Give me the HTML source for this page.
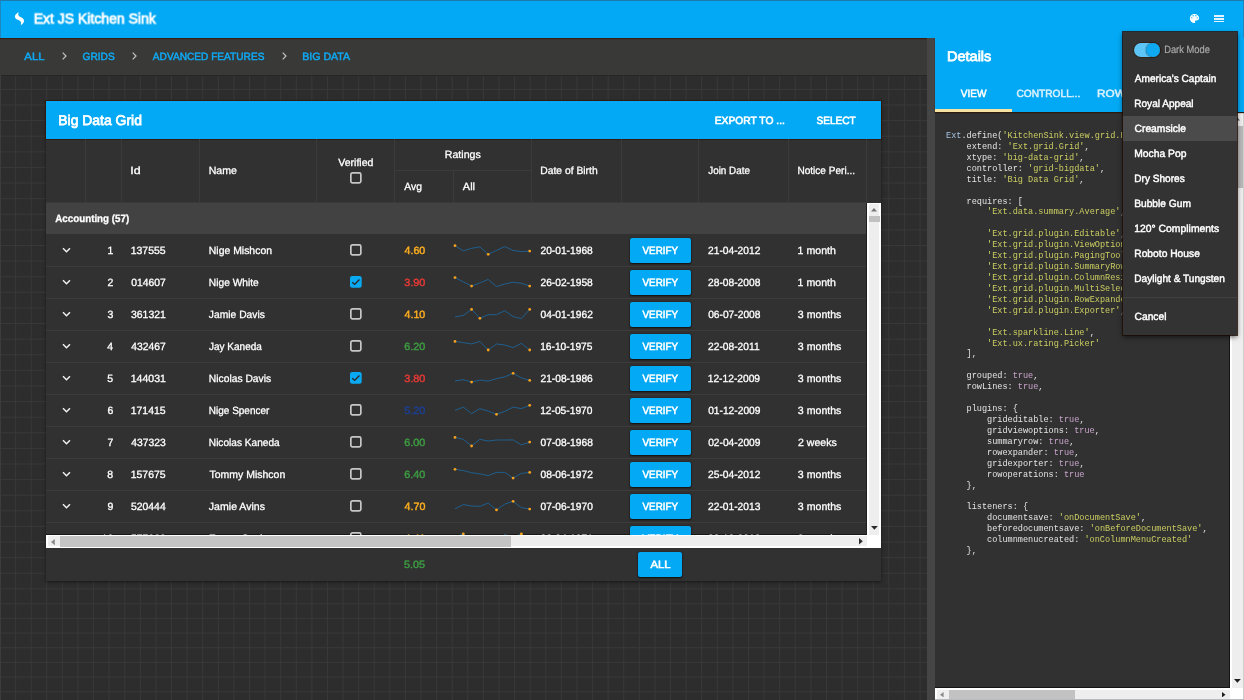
<!DOCTYPE html>
<html><head><meta charset="utf-8"><title>Ext JS Kitchen Sink</title>
<style>
*{box-sizing:border-box;margin:0;padding:0}
html,body{width:1244px;height:700px;overflow:hidden;background:#2d2d2d}
body{font-family:"Liberation Sans",sans-serif;font-size:10.5px;color:#fff;position:relative}
.abs{position:absolute}
.t{position:absolute;white-space:nowrap;line-height:14px;height:14px;display:block;-webkit-text-stroke:0.3px;transform-origin:0 50%}
#bg{left:0;top:75px;width:927px;height:521px;background-color:#2d2d2d;
 background-image:linear-gradient(#383838 1px,transparent 1px),linear-gradient(90deg,#383838 1px,transparent 1px);
 background-size:15.6px 15.62px;background-position:0 13.9px,15.1px 0}
#bg2{left:0;top:596px;width:927px;height:104px;background-color:#2d2d2d;
 background-image:linear-gradient(#383838 1px,transparent 1px),linear-gradient(90deg,#383838 1px,transparent 1px);
 background-size:15.6px 14.68px;background-position:0 7.2px,15.1px 0}
#top{left:0;top:0;width:1244px;height:38px;background:#03a9f4;border-top:1px solid #2079ab;border-left:1px solid #1f86c0;border-right:1px solid #1f86c0;box-shadow:0 1px 1px #3a1d10}
#crumbs{left:0;top:38px;width:927px;height:37px;background:#393938}
#split{left:927px;top:38px;width:8px;height:662px;background:#454545}
#det{left:935px;top:38px;width:309px;height:662px;background:#313131}
#dethead{left:0;top:0;width:309px;height:74px;background:#03a9f4;box-shadow:0 1px 1px #2a1a10;z-index:2}
#panel{left:46px;top:101px;width:835px;height:480px;background:#313131;box-shadow:0 1px 3px rgba(0,0,0,.5)}
#ptitle{left:0;top:0;width:835px;height:38px;background:#03a9f4;box-shadow:0 0 0 1px rgba(50,22,10,.85)}
.vl{position:absolute;width:1px;background:#3b3b3b}
.hl{position:absolute;height:1px;background:#3b3b3b}
.btn{position:absolute;background:#03a9f4;border-radius:2px;box-shadow:0 1px 2px rgba(0,0,0,.7),0 0 1px rgba(20,5,0,.8);height:25px}
.cb{position:absolute;width:11.6px;height:11.6px;border:1.8px solid #c4c4c4;border-radius:2.5px}
.cb.on{background:#03a9f4;border-color:#03a9f4}
#code{left:0;top:74px;width:295px;height:576px;overflow:hidden}
pre{font-family:"Liberation Mono",monospace;font-size:8.55px;line-height:10.92px;color:#e4e4e4;position:absolute;left:10.5px;top:19.3px;will-change:transform}
pre .s{color:#cbce62}pre .k{color:#a3c3e4}pre .tr{color:#c9a4cc}
#menu{left:1123px;top:32px;width:114px;height:303px;background:#333;z-index:10;box-shadow:0 2px 5px rgba(0,0,0,.6),0 0 0 1px rgba(42,18,8,.8)}
#root{position:absolute;left:0;top:0;width:1244px;height:700px;will-change:transform}
</style></head><body><div id="root">

<div id="bg" class="abs"></div><div id="bg2" class="abs"></div>
<div class="abs" style="left:0;top:75px;width:927px;height:1px;background:#262626"></div>
<div class="abs" style="left:0;top:38px;width:1px;height:662px;background:#3c3c3c"></div>
<div id="crumbs" class="abs">
<span class="t" style="left:24px;top:11px;transform:translate(0.31px,0.00px) skewX(.1deg) scaleX(1.0798);color:#0fa9f2;-webkit-text-stroke:0.5px;">ALL</span>
<span class="t" style="left:82px;top:11px;transform:translate(0.51px,0.00px) skewX(.1deg) scaleX(0.9671);color:#0fa9f2;-webkit-text-stroke:0.5px;">GRIDS</span>
<span class="t" style="left:152px;top:11px;transform:translate(0.83px,0.00px) skewX(.1deg) scaleX(0.9643);color:#0fa9f2;-webkit-text-stroke:0.5px;">ADVANCED FEATURES</span>
<span class="t" style="left:302px;top:11px;transform:translate(0.18px,0.00px) skewX(.1deg) scaleX(1.0095);color:#0fa9f2;-webkit-text-stroke:0.5px;">BIG DATA</span>
<svg class="abs" style="left:61.5px;top:14px" width="5" height="8" viewBox="0 0 5 8"><path d="M0.7 0.7 L4 4 L0.7 7.3" fill="none" stroke="#c4c4c4" stroke-width="1.2"/></svg>
<svg class="abs" style="left:131.5px;top:14px" width="5" height="8" viewBox="0 0 5 8"><path d="M0.7 0.7 L4 4 L0.7 7.3" fill="none" stroke="#c4c4c4" stroke-width="1.2"/></svg>
<svg class="abs" style="left:281.5px;top:14px" width="5" height="8" viewBox="0 0 5 8"><path d="M0.7 0.7 L4 4 L0.7 7.3" fill="none" stroke="#c4c4c4" stroke-width="1.2"/></svg>
</div>
<div id="top" class="abs">
<svg class="abs" style="left:13px;top:10px" width="12" height="16" viewBox="14 11 12 16"><path d="M18.8 12.2 C16.6 13.2 14.7 14.9 14.9 16.9 C15.1 18.9 17.6 19.5 19.3 20.4 C20.9 21.3 21.6 22.9 20.7 25.2 C22.9 24.1 24.3 22.3 24 20.3 C23.7 18.3 21.4 17.6 19.9 16.8 C18.4 16 17.7 14.4 18.8 12.2 Z" fill="#fff"/></svg>
<span class="t" style="left:32px;top:10px;transform:translate(0.77px,0.50px) skewX(.1deg) scaleX(0.9977);font-size:14px;-webkit-text-stroke:0.75px;">Ext JS Kitchen Sink</span>
<svg class="abs" style="left:1188px;top:12.2px" width="11" height="11" viewBox="0 0 24 24"><path fill="#fff" d="M12 2C6.5 2 2 6.5 2 12s4.5 10 10 10c.9 0 1.7-.7 1.7-1.7 0-.4-.2-.8-.4-1.1-.3-.3-.4-.7-.4-1.1 0-.9.7-1.7 1.7-1.7h2c3 0 5.5-2.5 5.5-5.5C22 6 17.5 2 12 2zM6 12c-.8 0-1.5-.7-1.5-1.5S5.2 9 6 9s1.5.7 1.5 1.5S6.800 12 6 12zm3-4.500C8.200 7.500 7.500 6.800 7.500 6S8.200 4.500 9 4.500s1.500.7 1.500 1.500S9.800 7.500 9 7.500zm6 0c-.8 0-1.500-.7-1.500-1.500S14.200 4.500 15 4.500s1.500.7 1.500 1.500-.7 1.500-1.500 1.500zm3 4.500c-.8 0-1.500-.7-1.500-1.500S17.200 9 18 9s1.500.7 1.500 1.500-.7 1.500-1.500 1.500z"/></svg>
<div class="abs" style="left:1213px;top:14.3px;width:10px;height:1.5px;background:#e3f4fe"></div>
<div class="abs" style="left:1213px;top:17.0px;width:10px;height:1.5px;background:#e3f4fe"></div>
<div class="abs" style="left:1213px;top:19.7px;width:10px;height:1.5px;background:#e3f4fe"></div>
</div>
<div id="split" class="abs"></div>
<div id="panel" class="abs">
<div id="ptitle" class="abs">
<span class="t" style="left:12px;top:11px;transform:translate(0.28px,0.60px) skewX(.1deg) scaleX(0.9955);font-size:14px;-webkit-text-stroke:0.75px;">Big Data Grid</span>
<span class="t" style="left:668px;top:12px;transform:translate(0.71px,0.00px) skewX(.1deg) scaleX(0.9809);-webkit-text-stroke:0.6px;">EXPORT TO ...</span>
<span class="t" style="left:770px;top:12px;transform:translate(0.49px,0.00px) skewX(.1deg) scaleX(0.9616);-webkit-text-stroke:0.6px;">SELECT</span>
</div>
<div class="vl" style="left:39px;top:38px;height:64px"></div>
<div class="vl" style="left:75px;top:38px;height:64px"></div>
<div class="vl" style="left:153px;top:38px;height:64px"></div>
<div class="vl" style="left:270px;top:38px;height:64px"></div>
<div class="vl" style="left:348px;top:38px;height:64px"></div>
<div class="vl" style="left:485px;top:38px;height:64px"></div>
<div class="vl" style="left:575px;top:38px;height:64px"></div>
<div class="vl" style="left:652px;top:38px;height:64px"></div>
<div class="vl" style="left:742px;top:38px;height:64px"></div>
<div class="vl" style="left:820px;top:38px;height:64px"></div>
<div class="vl" style="left:407px;top:70px;height:32px"></div>
<div class="hl" style="left:349px;top:69px;width:136px"></div>
<span class="t" style="left:84px;top:62px;transform:translate(0.28px,0.00px) skewX(.1deg) scaleX(1.1880);">Id</span>
<span class="t" style="left:162px;top:62px;transform:translate(0.69px,0.00px) skewX(.1deg) scaleX(1.0064);">Name</span>
<span class="t" style="left:292px;top:54px;transform:translate(0.20px,0.00px) skewX(.1deg) scaleX(1.0046);">Verified</span>
<svg class="abs" style="left:304.1px;top:71px" width="12" height="12" viewBox="0 0 12 12"><rect x="0.85" y="0.85" width="10" height="10" rx="1.6" fill="none" stroke="#c6c6c6" stroke-width="1.7"/></svg>
<span class="t" style="left:398px;top:46px;transform:translate(0.78px,0.00px) skewX(.1deg) scaleX(1.0097);">Ratings</span>
<span class="t" style="left:358px;top:78px;transform:translate(0.33px,0.00px) skewX(.1deg) scaleX(0.9819);">Avg</span>
<span class="t" style="left:416px;top:78px;transform:translate(0.82px,0.00px) skewX(.1deg) scaleX(1.0446);">All</span>
<span class="t" style="left:494px;top:62px;transform:translate(0.20px,0.00px) skewX(.1deg) scaleX(0.9843);">Date of Birth</span>
<span class="t" style="left:662px;top:62px;transform:translate(0.18px,0.00px) skewX(.1deg) scaleX(0.9417);">Join Date</span>
<span class="t" style="left:751px;top:62px;transform:translate(0.43px,0.00px) skewX(.1deg) scaleX(0.9580);">Notice Peri...</span>
<div class="abs" style="left:0;top:101px;width:821px;height:1px;background:#3a3a3a"></div>
<div class="abs" style="left:0;top:102px;width:821px;height:31px;background:#424242"></div>
<span class="t" style="left:9px;top:110px;transform:translate(0.25px,0.00px) skewX(.1deg) scaleX(0.9316);font-weight:700;">Accounting (57)</span>
<div class="abs" style="left:0;top:133px;width:821px;height:301px;overflow:hidden">
<div class="abs" style="left:0;top:300px;width:821px;height:1px;background:#181818"></div>
<svg class="abs" style="left:15.5px;top:13px" width="9" height="7" viewBox="0 0 9 7"><path d="M1 1.2 L4.5 4.8 L8 1.2" fill="none" stroke="#f0f0f0" stroke-width="1.45"/></svg>
<span class="t" style="left:61px;top:9px;transform:translate(0.46px,0.00px) skewX(.1deg) scaleX(1.0000);">1</span>
<span class="t" style="left:84px;top:9px;transform:translate(0.71px,0.00px) skewX(.1deg) scaleX(0.9980);">137555</span>
<span class="t" style="left:162px;top:9px;transform:translate(0.80px,0.00px) skewX(.1deg) scaleX(0.9933);">Nige Mishcon</span>
<svg class="abs" style="left:304.3px;top:10.1px" width="12" height="12" viewBox="0 0 12 12"><rect x="0.85" y="0.85" width="10" height="10" rx="1.6" fill="none" stroke="#c6c6c6" stroke-width="1.7"/></svg>
<span class="t" style="left:358px;top:9px;transform:translate(0.53px,0.00px) skewX(.1deg) scaleX(1.0160);color:#fbad1e;-webkit-text-stroke:0.45px;">4.60</span>
<svg class="abs" style="left:0;top:0;overflow:visible" width="1" height="1"><polyline points="409.0,11.7 417.3,16.9 425.6,14.3 433.9,12.9 442.2,20.3 450.5,16.4 458.8,12.6 467.1,16.4 475.4,17.6 483.7,17.1" fill="none" stroke="#1f5f8e" stroke-width="1"/><circle cx="409.0" cy="11.7" r="1.4" fill="#f7a11b"/><circle cx="442.2" cy="20.3" r="1.4" fill="#f7a11b"/><circle cx="483.7" cy="17.1" r="1.4" fill="#f7a11b"/></svg>
<span class="t" style="left:494px;top:9px;transform:translate(0.44px,0.00px) skewX(.1deg) scaleX(0.9740);">20-01-1968</span>
<div class="btn" style="left:584px;top:4px;width:61px"></div>
<span class="t" style="left:596px;top:9px;transform:translate(0.51px,0.30px) skewX(.1deg) scaleX(0.9375);-webkit-text-stroke:0.55px;">VERIFY</span>
<span class="t" style="left:662px;top:9px;transform:translate(0.04px,0.00px) skewX(.1deg) scaleX(0.9740);">21-04-2012</span>
<span class="t" style="left:751px;top:9px;transform:translate(0.60px,0.00px) skewX(.1deg) scaleX(1.0080);">1 month</span>
<div class="hl" style="left:0;top:32px;width:821px"></div>
<svg class="abs" style="left:15.5px;top:45px" width="9" height="7" viewBox="0 0 9 7"><path d="M1 1.2 L4.5 4.8 L8 1.2" fill="none" stroke="#f0f0f0" stroke-width="1.45"/></svg>
<span class="t" style="left:61px;top:41px;transform:translate(0.49px,0.00px) skewX(.1deg) scaleX(1.0000);">2</span>
<span class="t" style="left:85px;top:41px;transform:translate(0.13px,0.00px) skewX(.1deg) scaleX(0.9869);">014607</span>
<span class="t" style="left:162px;top:41px;transform:translate(0.81px,0.00px) skewX(.1deg) scaleX(0.9730);">Nige White</span>
<svg class="abs" style="left:304.3px;top:42.1px" width="12" height="12" viewBox="0 0 12 12"><rect x="0" y="0" width="11.7" height="11.7" rx="2.2" fill="#0aaaf3"/><path d="M2.3 6.2 L4.7 8.4 L9.4 3.5" fill="none" stroke="#2a2320" stroke-width="1.35"/></svg>
<span class="t" style="left:358px;top:41px;transform:translate(0.15px,0.00px) skewX(.1deg) scaleX(1.0366);color:#e53935;-webkit-text-stroke:0.45px;">3.90</span>
<svg class="abs" style="left:0;top:0;overflow:visible" width="1" height="1"><polyline points="409.0,43.6 417.3,47.9 425.6,52.1 433.9,48.9 442.2,45.4 450.5,52.6 458.8,50.0 467.1,48.3 475.4,49.3 483.7,52.1" fill="none" stroke="#1f5f8e" stroke-width="1"/><circle cx="409.0" cy="43.6" r="1.4" fill="#f7a11b"/><circle cx="425.6" cy="52.1" r="1.4" fill="#f7a11b"/><circle cx="483.7" cy="52.1" r="1.4" fill="#f7a11b"/></svg>
<span class="t" style="left:494px;top:41px;transform:translate(0.44px,0.00px) skewX(.1deg) scaleX(0.9740);">26-02-1958</span>
<div class="btn" style="left:584px;top:36px;width:61px"></div>
<span class="t" style="left:596px;top:41px;transform:translate(0.51px,0.30px) skewX(.1deg) scaleX(0.9375);-webkit-text-stroke:0.55px;">VERIFY</span>
<span class="t" style="left:662px;top:41px;transform:translate(0.04px,0.00px) skewX(.1deg) scaleX(0.9740);">28-08-2008</span>
<span class="t" style="left:751px;top:41px;transform:translate(0.60px,0.00px) skewX(.1deg) scaleX(1.0080);">1 month</span>
<div class="hl" style="left:0;top:64px;width:821px"></div>
<svg class="abs" style="left:15.5px;top:77px" width="9" height="7" viewBox="0 0 9 7"><path d="M1 1.2 L4.5 4.8 L8 1.2" fill="none" stroke="#f0f0f0" stroke-width="1.45"/></svg>
<span class="t" style="left:61px;top:73px;transform:translate(0.40px,0.00px) skewX(.1deg) scaleX(1.0000);">3</span>
<span class="t" style="left:84px;top:73px;transform:translate(0.96px,0.00px) skewX(.1deg) scaleX(0.9954);">361321</span>
<span class="t" style="left:162px;top:73px;transform:translate(0.86px,0.00px) skewX(.1deg) scaleX(0.9787);">Jamie Davis</span>
<svg class="abs" style="left:304.3px;top:74.1px" width="12" height="12" viewBox="0 0 12 12"><rect x="0.85" y="0.85" width="10" height="10" rx="1.6" fill="none" stroke="#c6c6c6" stroke-width="1.7"/></svg>
<span class="t" style="left:358px;top:73px;transform:translate(0.53px,0.00px) skewX(.1deg) scaleX(1.0160);color:#fbad1e;-webkit-text-stroke:0.45px;">4.10</span>
<svg class="abs" style="left:0;top:0;overflow:visible" width="1" height="1"><polyline points="409.0,82.9 417.3,81.4 425.6,75.4 433.9,84.3 442.2,80.7 450.5,80.7 458.8,76.7 467.1,82.6 475.4,84.6 483.7,75.4" fill="none" stroke="#1f5f8e" stroke-width="1"/><circle cx="425.6" cy="75.4" r="1.4" fill="#f7a11b"/><circle cx="433.9" cy="84.3" r="1.4" fill="#f7a11b"/><circle cx="483.7" cy="75.4" r="1.4" fill="#f7a11b"/></svg>
<span class="t" style="left:494px;top:73px;transform:translate(0.54px,0.00px) skewX(.1deg) scaleX(0.9740);">04-01-1962</span>
<div class="btn" style="left:584px;top:68px;width:61px"></div>
<span class="t" style="left:596px;top:73px;transform:translate(0.51px,0.30px) skewX(.1deg) scaleX(0.9375);-webkit-text-stroke:0.55px;">VERIFY</span>
<span class="t" style="left:662px;top:73px;transform:translate(0.14px,0.00px) skewX(.1deg) scaleX(0.9740);">06-07-2008</span>
<span class="t" style="left:751px;top:73px;transform:translate(0.85px,0.00px) skewX(.1deg) scaleX(1.0080);">3 months</span>
<div class="hl" style="left:0;top:96px;width:821px"></div>
<svg class="abs" style="left:15.5px;top:109px" width="9" height="7" viewBox="0 0 9 7"><path d="M1 1.2 L4.5 4.8 L8 1.2" fill="none" stroke="#f0f0f0" stroke-width="1.45"/></svg>
<span class="t" style="left:61px;top:105px;transform:translate(0.28px,0.00px) skewX(.1deg) scaleX(1.0000);">4</span>
<span class="t" style="left:85px;top:105px;transform:translate(0.28px,0.00px) skewX(.1deg) scaleX(0.9831);">432467</span>
<span class="t" style="left:162px;top:105px;transform:translate(0.89px,0.00px) skewX(.1deg) scaleX(0.9555);">Jay Kaneda</span>
<svg class="abs" style="left:304.3px;top:106.1px" width="12" height="12" viewBox="0 0 12 12"><rect x="0.85" y="0.85" width="10" height="10" rx="1.6" fill="none" stroke="#c6c6c6" stroke-width="1.7"/></svg>
<span class="t" style="left:358px;top:105px;transform:translate(0.21px,0.00px) skewX(.1deg) scaleX(1.0317);color:#3d9b42;-webkit-text-stroke:0.45px;">6.20</span>
<svg class="abs" style="left:0;top:0;overflow:visible" width="1" height="1"><polyline points="409.0,107.4 417.3,108.6 425.6,109.9 433.9,107.4 442.2,116.0 450.5,110.0 458.8,111.0 467.1,113.6 475.4,109.3 483.7,116.0" fill="none" stroke="#1f5f8e" stroke-width="1"/><circle cx="409.0" cy="107.4" r="1.4" fill="#f7a11b"/><circle cx="442.2" cy="116.0" r="1.4" fill="#f7a11b"/><circle cx="483.7" cy="116.0" r="1.4" fill="#f7a11b"/></svg>
<span class="t" style="left:494px;top:105px;transform:translate(0.13px,0.00px) skewX(.1deg) scaleX(0.9740);">16-10-1975</span>
<div class="btn" style="left:584px;top:100px;width:61px"></div>
<span class="t" style="left:596px;top:105px;transform:translate(0.51px,0.30px) skewX(.1deg) scaleX(0.9375);-webkit-text-stroke:0.55px;">VERIFY</span>
<span class="t" style="left:662px;top:105px;transform:translate(0.04px,0.00px) skewX(.1deg) scaleX(0.9740);">22-08-2011</span>
<span class="t" style="left:751px;top:105px;transform:translate(0.85px,0.00px) skewX(.1deg) scaleX(1.0080);">3 months</span>
<div class="hl" style="left:0;top:128px;width:821px"></div>
<svg class="abs" style="left:15.5px;top:141px" width="9" height="7" viewBox="0 0 9 7"><path d="M1 1.2 L4.5 4.8 L8 1.2" fill="none" stroke="#f0f0f0" stroke-width="1.45"/></svg>
<span class="t" style="left:61px;top:137px;transform:translate(0.35px,0.00px) skewX(.1deg) scaleX(1.0000);">5</span>
<span class="t" style="left:84px;top:137px;transform:translate(0.70px,0.00px) skewX(.1deg) scaleX(1.0029);">144031</span>
<span class="t" style="left:162px;top:137px;transform:translate(0.81px,0.00px) skewX(.1deg) scaleX(0.9795);">Nicolas Davis</span>
<svg class="abs" style="left:304.3px;top:138.1px" width="12" height="12" viewBox="0 0 12 12"><rect x="0" y="0" width="11.7" height="11.7" rx="2.2" fill="#0aaaf3"/><path d="M2.3 6.2 L4.7 8.4 L9.4 3.5" fill="none" stroke="#2a2320" stroke-width="1.35"/></svg>
<span class="t" style="left:358px;top:137px;transform:translate(0.15px,0.00px) skewX(.1deg) scaleX(1.0366);color:#e53935;-webkit-text-stroke:0.45px;">3.80</span>
<svg class="abs" style="left:0;top:0;overflow:visible" width="1" height="1"><polyline points="409.0,147.0 417.3,145.7 425.6,148.1 433.9,146.0 442.2,147.1 450.5,144.6 458.8,142.9 467.1,139.3 475.4,143.9 483.7,146.4" fill="none" stroke="#1f5f8e" stroke-width="1"/><circle cx="425.6" cy="148.1" r="1.4" fill="#f7a11b"/><circle cx="467.1" cy="139.3" r="1.4" fill="#f7a11b"/><circle cx="483.7" cy="146.4" r="1.4" fill="#f7a11b"/></svg>
<span class="t" style="left:494px;top:137px;transform:translate(0.44px,0.00px) skewX(.1deg) scaleX(0.9740);">21-08-1986</span>
<div class="btn" style="left:584px;top:132px;width:61px"></div>
<span class="t" style="left:596px;top:137px;transform:translate(0.51px,0.30px) skewX(.1deg) scaleX(0.9375);-webkit-text-stroke:0.55px;">VERIFY</span>
<span class="t" style="left:661px;top:137px;transform:translate(0.73px,0.00px) skewX(.1deg) scaleX(0.9740);">12-12-2009</span>
<span class="t" style="left:751px;top:137px;transform:translate(0.85px,0.00px) skewX(.1deg) scaleX(1.0080);">3 months</span>
<div class="hl" style="left:0;top:160px;width:821px"></div>
<svg class="abs" style="left:15.5px;top:173px" width="9" height="7" viewBox="0 0 9 7"><path d="M1 1.2 L4.5 4.8 L8 1.2" fill="none" stroke="#f0f0f0" stroke-width="1.45"/></svg>
<span class="t" style="left:61px;top:169px;transform:translate(0.37px,0.00px) skewX(.1deg) scaleX(1.0000);">6</span>
<span class="t" style="left:84px;top:169px;transform:translate(0.71px,0.00px) skewX(.1deg) scaleX(0.9980);">171415</span>
<span class="t" style="left:162px;top:169px;transform:translate(0.83px,0.00px) skewX(.1deg) scaleX(0.9504);">Nige Spencer</span>
<svg class="abs" style="left:304.3px;top:170.1px" width="12" height="12" viewBox="0 0 12 12"><rect x="0.85" y="0.85" width="10" height="10" rx="1.6" fill="none" stroke="#c6c6c6" stroke-width="1.7"/></svg>
<span class="t" style="left:358px;top:169px;transform:translate(0.14px,0.00px) skewX(.1deg) scaleX(1.0354);color:#1c3f94;-webkit-text-stroke:0.45px;">5.20</span>
<svg class="abs" style="left:0;top:0;overflow:visible" width="1" height="1"><polyline points="409.0,176.4 417.3,173.1 425.6,179.6 433.9,174.6 442.2,177.1 450.5,180.3 458.8,177.4 467.1,173.1 475.4,174.6 483.7,171.3" fill="none" stroke="#1f5f8e" stroke-width="1"/><circle cx="450.5" cy="180.3" r="1.4" fill="#f7a11b"/><circle cx="483.7" cy="171.3" r="1.4" fill="#f7a11b"/></svg>
<span class="t" style="left:494px;top:169px;transform:translate(0.13px,0.00px) skewX(.1deg) scaleX(0.9740);">12-05-1970</span>
<div class="btn" style="left:584px;top:164px;width:61px"></div>
<span class="t" style="left:596px;top:169px;transform:translate(0.51px,0.30px) skewX(.1deg) scaleX(0.9375);-webkit-text-stroke:0.55px;">VERIFY</span>
<span class="t" style="left:662px;top:169px;transform:translate(0.13px,0.00px) skewX(.1deg) scaleX(0.9740);">01-12-2009</span>
<span class="t" style="left:751px;top:169px;transform:translate(0.85px,0.00px) skewX(.1deg) scaleX(1.0080);">3 months</span>
<div class="hl" style="left:0;top:192px;width:821px"></div>
<svg class="abs" style="left:15.5px;top:205px" width="9" height="7" viewBox="0 0 9 7"><path d="M1 1.2 L4.5 4.8 L8 1.2" fill="none" stroke="#f0f0f0" stroke-width="1.45"/></svg>
<span class="t" style="left:61px;top:201px;transform:translate(0.41px,0.00px) skewX(.1deg) scaleX(1.0000);">7</span>
<span class="t" style="left:85px;top:201px;transform:translate(0.28px,0.00px) skewX(.1deg) scaleX(0.9823);">437323</span>
<span class="t" style="left:162px;top:201px;transform:translate(0.82px,0.00px) skewX(.1deg) scaleX(0.9627);">Nicolas Kaneda</span>
<svg class="abs" style="left:304.3px;top:202.1px" width="12" height="12" viewBox="0 0 12 12"><rect x="0.85" y="0.85" width="10" height="10" rx="1.6" fill="none" stroke="#c6c6c6" stroke-width="1.7"/></svg>
<span class="t" style="left:358px;top:201px;transform:translate(0.21px,0.00px) skewX(.1deg) scaleX(1.0317);color:#3d9b42;-webkit-text-stroke:0.45px;">6.00</span>
<svg class="abs" style="left:0;top:0;overflow:visible" width="1" height="1"><polyline points="409.0,203.4 417.3,205.3 425.6,212.0 433.9,205.3 442.2,207.0 450.5,206.0 458.8,206.0 467.1,205.9 475.4,210.9 483.7,208.1" fill="none" stroke="#1f5f8e" stroke-width="1"/><circle cx="409.0" cy="203.4" r="1.4" fill="#f7a11b"/><circle cx="425.6" cy="212.0" r="1.4" fill="#f7a11b"/><circle cx="483.7" cy="208.1" r="1.4" fill="#f7a11b"/></svg>
<span class="t" style="left:494px;top:201px;transform:translate(0.53px,0.00px) skewX(.1deg) scaleX(0.9740);">07-08-1968</span>
<div class="btn" style="left:584px;top:196px;width:61px"></div>
<span class="t" style="left:596px;top:201px;transform:translate(0.51px,0.30px) skewX(.1deg) scaleX(0.9375);-webkit-text-stroke:0.55px;">VERIFY</span>
<span class="t" style="left:662px;top:201px;transform:translate(0.13px,0.00px) skewX(.1deg) scaleX(0.9740);">02-04-2009</span>
<span class="t" style="left:751px;top:201px;transform:translate(0.91px,0.00px) skewX(.1deg) scaleX(1.0080);">2 weeks</span>
<div class="hl" style="left:0;top:224px;width:821px"></div>
<svg class="abs" style="left:15.5px;top:237px" width="9" height="7" viewBox="0 0 9 7"><path d="M1 1.2 L4.5 4.8 L8 1.2" fill="none" stroke="#f0f0f0" stroke-width="1.45"/></svg>
<span class="t" style="left:61px;top:233px;transform:translate(0.36px,0.00px) skewX(.1deg) scaleX(1.0000);">8</span>
<span class="t" style="left:84px;top:233px;transform:translate(0.71px,0.00px) skewX(.1deg) scaleX(0.9976);">157675</span>
<span class="t" style="left:163px;top:233px;transform:translate(0.44px,0.00px) skewX(.1deg) scaleX(0.9993);">Tommy Mishcon</span>
<svg class="abs" style="left:304.3px;top:234.1px" width="12" height="12" viewBox="0 0 12 12"><rect x="0.85" y="0.85" width="10" height="10" rx="1.6" fill="none" stroke="#c6c6c6" stroke-width="1.7"/></svg>
<span class="t" style="left:358px;top:233px;transform:translate(0.20px,0.00px) skewX(.1deg) scaleX(1.0339);color:#3d9b42;-webkit-text-stroke:0.45px;">6.40</span>
<svg class="abs" style="left:0;top:0;overflow:visible" width="1" height="1"><polyline points="409.0,235.3 417.3,236.6 425.6,238.7 433.9,239.9 442.2,241.6 450.5,238.4 458.8,238.4 467.1,244.1 475.4,239.4 483.7,238.4" fill="none" stroke="#1f5f8e" stroke-width="1"/><circle cx="409.0" cy="235.3" r="1.4" fill="#f7a11b"/><circle cx="467.1" cy="244.1" r="1.4" fill="#f7a11b"/><circle cx="483.7" cy="238.4" r="1.4" fill="#f7a11b"/></svg>
<span class="t" style="left:494px;top:233px;transform:translate(0.54px,0.00px) skewX(.1deg) scaleX(0.9740);">08-06-1972</span>
<div class="btn" style="left:584px;top:228px;width:61px"></div>
<span class="t" style="left:596px;top:233px;transform:translate(0.51px,0.30px) skewX(.1deg) scaleX(0.9375);-webkit-text-stroke:0.55px;">VERIFY</span>
<span class="t" style="left:662px;top:233px;transform:translate(0.04px,0.00px) skewX(.1deg) scaleX(0.9740);">25-04-2012</span>
<span class="t" style="left:751px;top:233px;transform:translate(0.85px,0.00px) skewX(.1deg) scaleX(1.0080);">3 months</span>
<div class="hl" style="left:0;top:256px;width:821px"></div>
<svg class="abs" style="left:15.5px;top:269px" width="9" height="7" viewBox="0 0 9 7"><path d="M1 1.2 L4.5 4.8 L8 1.2" fill="none" stroke="#f0f0f0" stroke-width="1.45"/></svg>
<span class="t" style="left:61px;top:265px;transform:translate(0.41px,0.00px) skewX(.1deg) scaleX(1.0000);">9</span>
<span class="t" style="left:84px;top:265px;transform:translate(0.94px,0.00px) skewX(.1deg) scaleX(0.9921);">520444</span>
<span class="t" style="left:162px;top:265px;transform:translate(0.84px,0.00px) skewX(.1deg) scaleX(1.0053);">Jamie Avins</span>
<svg class="abs" style="left:304.3px;top:266.1px" width="12" height="12" viewBox="0 0 12 12"><rect x="0.85" y="0.85" width="10" height="10" rx="1.6" fill="none" stroke="#c6c6c6" stroke-width="1.7"/></svg>
<span class="t" style="left:358px;top:265px;transform:translate(0.49px,0.00px) skewX(.1deg) scaleX(1.0200);color:#fbad1e;-webkit-text-stroke:0.45px;">4.70</span>
<svg class="abs" style="left:0;top:0;overflow:visible" width="1" height="1"><polyline points="409.0,274.9 417.3,270.6 425.6,272.0 433.9,272.3 442.2,269.1 450.5,275.9 458.8,270.1 467.1,267.3 475.4,273.7 483.7,275.1" fill="none" stroke="#1f5f8e" stroke-width="1"/><circle cx="450.5" cy="275.9" r="1.4" fill="#f7a11b"/><circle cx="467.1" cy="267.3" r="1.4" fill="#f7a11b"/><circle cx="483.7" cy="275.1" r="1.4" fill="#f7a11b"/></svg>
<span class="t" style="left:494px;top:265px;transform:translate(0.53px,0.00px) skewX(.1deg) scaleX(0.9740);">07-06-1970</span>
<div class="btn" style="left:584px;top:260px;width:61px"></div>
<span class="t" style="left:596px;top:265px;transform:translate(0.51px,0.30px) skewX(.1deg) scaleX(0.9375);-webkit-text-stroke:0.55px;">VERIFY</span>
<span class="t" style="left:662px;top:265px;transform:translate(0.02px,0.00px) skewX(.1deg) scaleX(0.9740);">22-01-2013</span>
<span class="t" style="left:751px;top:265px;transform:translate(0.85px,0.00px) skewX(.1deg) scaleX(1.0080);">3 months</span>
<div class="hl" style="left:0;top:288px;width:821px"></div>
<svg class="abs" style="left:15.5px;top:301px" width="9" height="7" viewBox="0 0 9 7"><path d="M1 1.2 L4.5 4.8 L8 1.2" fill="none" stroke="#f0f0f0" stroke-width="1.45"/></svg>
<span class="t" style="left:55px;top:297px;transform:translate(0.61px,0.00px) skewX(.1deg) scaleX(1.0000);">10</span>
<span class="t" style="left:84px;top:297px;transform:translate(0.94px,0.00px) skewX(.1deg) scaleX(0.9924);">577323</span>
<span class="t" style="left:163px;top:297px;transform:translate(0.47px,0.00px) skewX(.1deg) scaleX(0.9155);">Tommy Davis</span>
<svg class="abs" style="left:304.3px;top:298.1px" width="12" height="12" viewBox="0 0 12 12"><rect x="0.85" y="0.85" width="10" height="10" rx="1.6" fill="none" stroke="#c6c6c6" stroke-width="1.7"/></svg>
<span class="t" style="left:358px;top:297px;transform:translate(0.50px,0.00px) skewX(.1deg) scaleX(1.0186);color:#fbad1e;-webkit-text-stroke:0.45px;">4.40</span>
<svg class="abs" style="left:0;top:0;overflow:visible" width="1" height="1"><polyline points="409.0,303.0 417.3,299.8 425.6,306.0 433.9,304.0 442.2,302.0 450.5,307.0 458.8,300.5 467.1,303.0 475.4,300.0 483.7,308.0" fill="none" stroke="#1f5f8e" stroke-width="1"/><circle cx="417.3" cy="299.8" r="1.4" fill="#f7a11b"/><circle cx="475.4" cy="300.0" r="1.4" fill="#f7a11b"/></svg>
<span class="t" style="left:494px;top:297px;transform:translate(0.54px,0.00px) skewX(.1deg) scaleX(0.9740);">02-04-1971</span>
<div class="btn" style="left:584px;top:292px;width:61px"></div>
<span class="t" style="left:596px;top:297px;transform:translate(0.51px,0.30px) skewX(.1deg) scaleX(0.9375);-webkit-text-stroke:0.55px;">VERIFY</span>
<span class="t" style="left:662px;top:297px;transform:translate(0.04px,0.00px) skewX(.1deg) scaleX(0.9740);">28-12-2010</span>
<span class="t" style="left:751px;top:297px;transform:translate(0.85px,0.00px) skewX(.1deg) scaleX(1.0080);">3 months</span>
</div>
<div class="abs" style="left:820px;top:102px;width:1px;height:332px;background:#1e1e1e"></div>
<div class="abs" style="left:821px;top:102px;width:14px;height:332px;background:#fff">
<div class="abs" style="left:2px;top:1px;width:10px;height:331px;background:#eeeeee"></div>
<svg class="abs" style="left:4.4px;top:5px" width="6" height="3.6" viewBox="0 0 6 3.6"><path d="M0 3.6 L3 0 L6 3.6 Z" fill="#777"/></svg>
<div class="abs" style="left:2px;top:13px;width:11px;height:6px;background:#c1c1c1"></div>
<svg class="abs" style="left:3.8px;top:323.3px" width="6.8" height="3.8" viewBox="0 0 6.8 3.8"><path d="M0 0 L3.4 3.8 L6.8 0 Z" fill="#2a2a2a"/></svg>
</div>
<div class="abs" style="left:0;top:434px;width:835px;height:13px;background:#fff">
<div class="abs" style="left:2px;top:1px;width:819px;height:10.4px;background:#eeeeee"></div>
<svg class="abs" style="left:5.3px;top:3.5px" width="3.8" height="6.2" viewBox="0 0 3.8 6.2"><path d="M3.8 0 L0 3.1 L3.8 6.2 Z" fill="#8a8a8a"/></svg>
<div class="abs" style="left:13.8px;top:1px;width:451.6px;height:11px;background:#c4c4c4"></div>
<svg class="abs" style="left:813.3px;top:3.4px" width="3.8" height="6.4" viewBox="0 0 3.8 6.4"><path d="M0 0 L3.8 3.2 L0 6.4 Z" fill="#2a2a2a"/></svg>
</div>
<span class="t" style="left:357px;top:456px;transform:translate(0.94px,0.40px) skewX(.1deg) scaleX(1.0263);color:#3d9b42;-webkit-text-stroke:0.45px;">5.05</span>
<div class="btn" style="left:592px;top:451px;width:44px"></div>
<span class="t" style="left:604px;top:456px;transform:translate(0.41px,0.40px) skewX(.1deg) scaleX(1.0853);-webkit-text-stroke:0.55px;">ALL</span>
</div>
<div id="det" class="abs">
<div id="dethead" class="abs">
<span class="t" style="left:11px;top:10px;transform:translate(0.93px,0.70px) skewX(.1deg) scaleX(1.0380);font-size:14px;-webkit-text-stroke:0.75px;">Details</span>
<span class="t" style="left:25px;top:48px;transform:translate(0.81px,0.30px) skewX(.1deg) scaleX(0.9594);-webkit-text-stroke:0.5px;">VIEW</span>
<span class="t" style="left:81px;top:48px;transform:translate(0.51px,0.30px) skewX(.1deg) scaleX(0.9666);color:#dcf2fd;-webkit-text-stroke:0.5px;">CONTROLL...</span>
<span class="t" style="left:162px;top:48px;transform:translate(0.10px,0.30px) skewX(.1deg) scaleX(1.1203);color:#dcf2fd;-webkit-text-stroke:0.5px;">ROW ...</span>
<div class="abs" style="left:0;top:71px;width:77px;height:3px;background:#f7e3a1"></div>
</div>
<div id="code" class="abs"><pre>
<span class="k">Ext</span>.define(<span class="s">'KitchenSink.view.grid.BigData'</span>, {
    extend: <span class="s">'Ext.grid.Grid'</span>,
    xtype: <span class="s">'big-data-grid'</span>,
    controller: <span class="s">'grid-bigdata'</span>,
    title: <span class="s">'Big Data Grid'</span>,

    requires: [
        <span class="s">'Ext.data.summary.Average'</span>,

        <span class="s">'Ext.grid.plugin.Editable'</span>,
        <span class="s">'Ext.grid.plugin.ViewOptions'</span>,
        <span class="s">'Ext.grid.plugin.PagingToolbar'</span>,
        <span class="s">'Ext.grid.plugin.SummaryRow'</span>,
        <span class="s">'Ext.grid.plugin.ColumnResizing'</span>,
        <span class="s">'Ext.grid.plugin.MultiSelection'</span>,
        <span class="s">'Ext.grid.plugin.RowExpander'</span>,
        <span class="s">'Ext.grid.plugin.Exporter'</span>,

        <span class="s">'Ext.sparkline.Line'</span>,
        <span class="s">'Ext.ux.rating.Picker'</span>
    ],

    grouped: <span class="tr">true</span>,
    rowLines: <span class="tr">true</span>,

    plugins: {
        grideditable: <span class="tr">true</span>,
        gridviewoptions: <span class="tr">true</span>,
        summaryrow: <span class="tr">true</span>,
        rowexpander: <span class="tr">true</span>,
        gridexporter: <span class="tr">true</span>,
        rowoperations: <span class="tr">true</span>
    },

    listeners: {
        documentsave: <span class="s">'onDocumentSave'</span>,
        beforedocumentsave: <span class="s">'onBeforeDocumentSave'</span>,
        columnmenucreated: <span class="s">'onColumnMenuCreated'</span>
    },
</pre></div>
<div class="abs" style="left:294px;top:74px;width:1px;height:576px;background:#141414"></div>
<div class="abs" style="left:0;top:649px;width:295px;height:1px;background:#141414"></div>
<div class="abs" style="left:295px;top:74px;width:14px;height:588px;background:#fff">
<div class="abs" style="left:2px;top:1px;width:10.5px;height:575px;background:#eeeeee"></div>
<div class="abs" style="left:13px;top:0;width:1px;height:588px;background:#cfcfcf"></div>
<svg class="abs" style="left:4.4px;top:5px" width="6" height="3.6" viewBox="0 0 6 3.6"><path d="M0 3.6 L3 0 L6 3.6 Z" fill="#555"/></svg>
<div class="abs" style="left:2px;top:14px;width:11px;height:62px;background:#b9b9b9"></div>
<svg class="abs" style="left:3.9px;top:567.2px" width="6.8" height="3.8" viewBox="0 0 6.8 3.8"><path d="M0 0 L3.4 3.8 L6.8 0 Z" fill="#1e1e1e"/></svg>
</div>
<div class="abs" style="left:0;top:650px;width:295px;height:12px;background:#fff">
<div class="abs" style="left:2px;top:2px;width:293px;height:9px;background:#eeeeee"></div>
<svg class="abs" style="left:5.2px;top:4.1px" width="3.6" height="5.4" viewBox="0 0 3.6 5.4"><path d="M3.6 0 L0 2.7 L3.6 5.4 Z" fill="#8a8a8a"/></svg>
<div class="abs" style="left:13.6px;top:2px;width:126.4px;height:9px;background:#c2c2c2"></div>
<svg class="abs" style="left:287.4px;top:4.1px" width="3.5" height="5.4" viewBox="0 0 3.5 5.4"><path d="M0 0 L3.5 2.7 L0 5.4 Z" fill="#1e1e1e"/></svg>
</div>
<div class="abs" style="left:0;top:661px;width:309px;height:1px;background:#b8bcbe"></div>
</div>
<div id="menu" class="abs">
<div class="abs" style="left:0;top:84px;width:114px;height:25px;background:#4b4b4b"></div>
<div class="abs" style="left:11.4px;top:11.3px;width:26px;height:14px;border-radius:7px;background:#5cc5f6;box-shadow:0 0 0 .8px rgba(45,20,10,.75)"></div>
<div class="abs" style="left:23.4px;top:11.3px;width:14px;height:14px;border-radius:7px;background:#0fa9f2;box-shadow:0 0 1.5px rgba(30,10,0,.9)"></div>
<span class="t" style="left:41px;top:10px;transform:translate(0.18px,0.00px) skewX(.1deg) scaleX(0.8891);color:#a9a9a9;-webkit-text-stroke:0.2px;">Dark Mode</span>
<span class="t" style="left:11px;top:39px;transform:translate(0.83px,0.00px) skewX(.1deg) scaleX(0.9603);-webkit-text-stroke:0.45px;">America's Captain</span>
<span class="t" style="left:11px;top:64px;transform:translate(0.23px,0.00px) skewX(.1deg) scaleX(0.9592);-webkit-text-stroke:0.45px;">Royal Appeal</span>
<span class="t" style="left:11px;top:89px;transform:translate(0.52px,0.00px) skewX(.1deg) scaleX(0.9806);-webkit-text-stroke:0.45px;">Creamsicle</span>
<span class="t" style="left:11px;top:114px;transform:translate(0.21px,0.00px) skewX(.1deg) scaleX(0.9837);-webkit-text-stroke:0.45px;">Mocha Pop</span>
<span class="t" style="left:11px;top:139px;transform:translate(0.23px,0.00px) skewX(.1deg) scaleX(0.9611);-webkit-text-stroke:0.45px;">Dry Shores</span>
<span class="t" style="left:11px;top:164px;transform:translate(0.21px,0.00px) skewX(.1deg) scaleX(0.9719);-webkit-text-stroke:0.45px;">Bubble Gum</span>
<span class="t" style="left:11px;top:189px;transform:translate(0.21px,0.00px) skewX(.1deg) scaleX(0.9891);-webkit-text-stroke:0.45px;">120° Compliments</span>
<span class="t" style="left:11px;top:214px;transform:translate(0.21px,0.00px) skewX(.1deg) scaleX(0.9783);-webkit-text-stroke:0.45px;">Roboto House</span>
<span class="t" style="left:11px;top:239px;transform:translate(0.22px,0.00px) skewX(.1deg) scaleX(0.9648);-webkit-text-stroke:0.45px;">Daylight &amp; Tungsten</span>
<span class="t" style="left:11px;top:277px;transform:translate(0.52px,0.00px) skewX(.1deg) scaleX(0.9769);-webkit-text-stroke:0.45px;">Cancel</span>
<div class="hl" style="left:0;top:265px;width:114px;background:#404040"></div>
</div>
</div></body></html>
